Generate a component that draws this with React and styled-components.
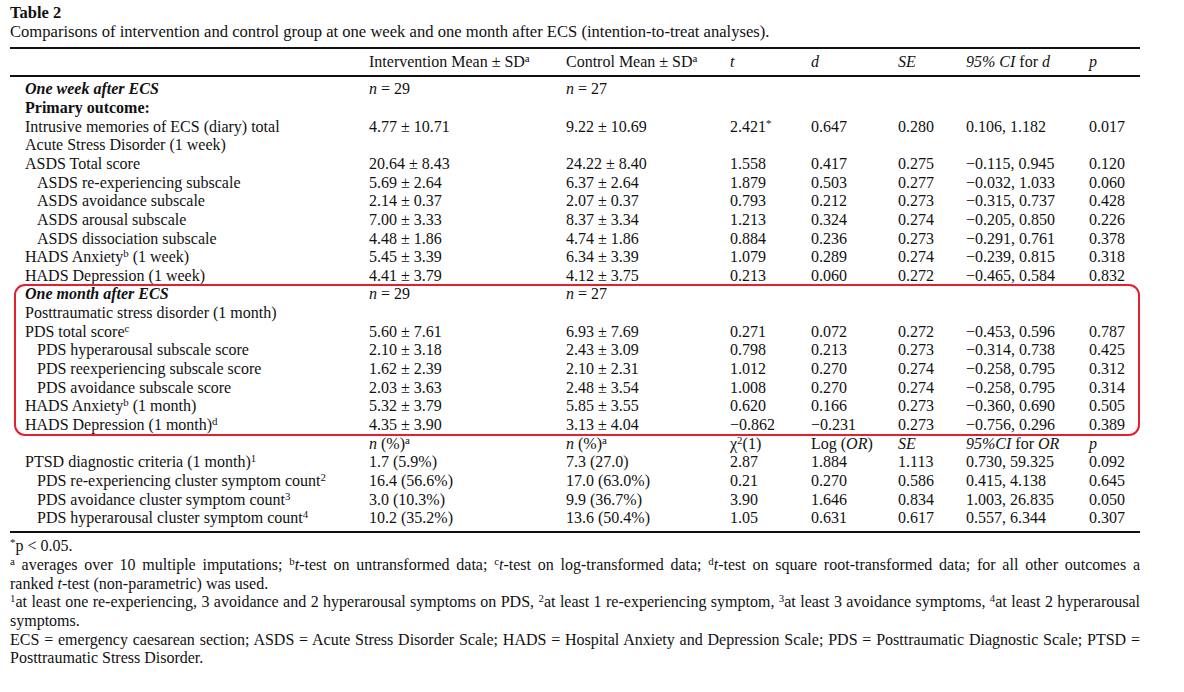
import React from "react";
import styled, { createGlobalStyle } from "styled-components";

const GlobalStyle = createGlobalStyle`
  body {
    margin: 0;
    background: #fff;
    color: #111;
    font-family: "Liberation Serif", "Times New Roman", serif;
    font-size: 16px;
  }
`;

const Page = styled.div`
  width: 1130px;
  padding: 3px 0 0 10px;
`;

const Title = styled.div`
  font-weight: bold;
  font-size: 16.5px;
  line-height: 19px;
`;

const Caption = styled.div`
  font-size: 16.6px;
  line-height: 19px;
`;

const Rule = styled.div`
  height: ${(p) => (p.$thin ? "1.5px" : "2px")};
  background: #111;
  margin-top: ${(p) => p.$top || 0}px;
`;

const Head = styled.div`
  padding: 3.5px 0 4px;
`;

const Body = styled.div`
  padding: 3.6px 0 3px;
`;

const Row = styled.div`
  display: grid;
  grid-template-columns: 359px 197px 164px 81px 87px 68px 123px 51px;
  line-height: 18.65px;
  white-space: nowrap;
`;

const Label = styled.div`
  padding-left: ${(p) => (p.$indent ? 27 : 15)}px;
  font-weight: ${(p) => (p.$bold ? "bold" : "normal")};
  font-style: ${(p) => (p.$italic ? "italic" : "normal")};
`;

const Cell = styled.div``;

const Highlight = styled.div`
  position: relative;

  &::before {
    content: "";
    position: absolute;
    left: 4px;
    right: 0;
    top: -1px;
    bottom: -1px;
    border: 2px solid #e5202c;
    border-radius: 11px;
    pointer-events: none;
  }
`;

const Sup = styled.sup`
  font-size: 0.68em;
  line-height: 0;
  vertical-align: 0.48em;
`;

const I = styled.i``;

const Notes = styled.div`
  margin-top: 4.4px;
  line-height: 18.65px;
`;

const Line = styled.div`
  white-space: nowrap;
  text-align: ${(p) => (p.$full ? "justify" : "left")};
  text-align-last: ${(p) => (p.$full ? "justify" : "left")};
`;

const N = ({ v }) => (
  <>
    <I>n</I> = {v}
  </>
);

const weekRows = [
  { label: "Intrusive memories of ECS (diary) total", v: ["4.77 ± 10.71", "9.22 ± 10.69", <>2.421<Sup>*</Sup></>, "0.647", "0.280", "0.106, 1.182", "0.017"] },
  { label: "Acute Stress Disorder (1 week)" },
  { label: "ASDS Total score", v: ["20.64 ± 8.43", "24.22 ± 8.40", "1.558", "0.417", "0.275", "−0.115, 0.945", "0.120"] },
  { label: "ASDS re-experiencing subscale", sub: true, v: ["5.69 ± 2.64", "6.37 ± 2.64", "1.879", "0.503", "0.277", "−0.032, 1.033", "0.060"] },
  { label: "ASDS avoidance subscale", sub: true, v: ["2.14 ± 0.37", "2.07 ± 0.37", "0.793", "0.212", "0.273", "−0.315, 0.737", "0.428"] },
  { label: "ASDS arousal subscale", sub: true, v: ["7.00 ± 3.33", "8.37 ± 3.34", "1.213", "0.324", "0.274", "−0.205, 0.850", "0.226"] },
  { label: "ASDS dissociation subscale", sub: true, v: ["4.48 ± 1.86", "4.74 ± 1.86", "0.884", "0.236", "0.273", "−0.291, 0.761", "0.378"] },
  { label: <>HADS Anxiety<Sup>b</Sup> (1 week)</>, v: ["5.45 ± 3.39", "6.34 ± 3.39", "1.079", "0.289", "0.274", "−0.239, 0.815", "0.318"] },
  { label: "HADS Depression (1 week)", v: ["4.41 ± 3.79", "4.12 ± 3.75", "0.213", "0.060", "0.272", "−0.465, 0.584", "0.832"] },
];

const monthRows = [
  { label: "Posttraumatic stress disorder (1 month)" },
  { label: <>PDS total score<Sup>c</Sup></>, v: ["5.60 ± 7.61", "6.93 ± 7.69", "0.271", "0.072", "0.272", "−0.453, 0.596", "0.787"] },
  { label: "PDS hyperarousal subscale score", sub: true, v: ["2.10 ± 3.18", "2.43 ± 3.09", "0.798", "0.213", "0.273", "−0.314, 0.738", "0.425"] },
  { label: "PDS reexperiencing subscale score", sub: true, v: ["1.62 ± 2.39", "2.10 ± 2.31", "1.012", "0.270", "0.274", "−0.258, 0.795", "0.312"] },
  { label: "PDS avoidance subscale score", sub: true, v: ["2.03 ± 3.63", "2.48 ± 3.54", "1.008", "0.270", "0.274", "−0.258, 0.795", "0.314"] },
  { label: <>HADS Anxiety<Sup>b</Sup> (1 month)</>, v: ["5.32 ± 3.79", "5.85 ± 3.55", "0.620", "0.166", "0.273", "−0.360, 0.690", "0.505"] },
  { label: <>HADS Depression (1 month)<Sup>d</Sup></>, v: ["4.35 ± 3.90", "3.13 ± 4.04", "−0.862", "−0.231", "0.273", "−0.756, 0.296", "0.389"] },
];

const countRows = [
  { label: <>PTSD diagnostic criteria (1 month)<Sup>1</Sup></>, v: ["1.7 (5.9%)", "7.3 (27.0)", "2.87", "1.884", "1.113", "0.730, 59.325", "0.092"] },
  { label: <>PDS re-experiencing cluster symptom count<Sup>2</Sup></>, sub: true, v: ["16.4 (56.6%)", "17.0 (63.0%)", "0.21", "0.270", "0.586", "0.415, 4.138", "0.645"] },
  { label: <>PDS avoidance cluster symptom count<Sup>3</Sup></>, sub: true, v: ["3.0 (10.3%)", "9.9 (36.7%)", "3.90", "1.646", "0.834", "1.003, 26.835", "0.050"] },
  { label: <>PDS hyperarousal cluster symptom count<Sup>4</Sup></>, sub: true, v: ["10.2 (35.2%)", "13.6 (50.4%)", "1.05", "0.631", "0.617", "0.557, 6.344", "0.307"] },
];

function DataRow({ row }) {
  const values = row.v || [];
  return (
    <Row>
      <Label $indent={row.sub}>{row.label}</Label>
      {Array.from({ length: 7 }).map((_, i) => (
        <Cell key={i}>{values[i]}</Cell>
      ))}
    </Row>
  );
}

function SectionRow({ title }) {
  return (
    <Row>
      <Label $bold $italic>{title}</Label>
      <Cell><N v={29} /></Cell>
      <Cell><N v={27} /></Cell>
    </Row>
  );
}

export default function App() {
  return (
    <Page>
      <GlobalStyle />
      <Title>Table 2</Title>
      <Caption>
        Comparisons of intervention and control group at one week and one month after ECS (intention-to-treat analyses).
      </Caption>
      <Rule $top={6} />
      <Head>
        <Row>
          <Label />
          <Cell>Intervention Mean ± SD<Sup>a</Sup></Cell>
          <Cell>Control Mean ± SD<Sup>a</Sup></Cell>
          <Cell><I>t</I></Cell>
          <Cell><I>d</I></Cell>
          <Cell><I>SE</I></Cell>
          <Cell><I>95% CI</I> for <I>d</I></Cell>
          <Cell><I>p</I></Cell>
        </Row>
      </Head>
      <Rule $thin />
      <Body>
        <SectionRow title="One week after ECS" />
        <Row>
          <Label $bold>Primary outcome:</Label>
        </Row>
        {weekRows.map((r, i) => (
          <DataRow key={i} row={r} />
        ))}
        <Highlight>
          <SectionRow title="One month after ECS" />
          {monthRows.map((r, i) => (
            <DataRow key={i} row={r} />
          ))}
        </Highlight>
        <Row>
          <Label />
          <Cell><I>n</I> (%)<Sup>a</Sup></Cell>
          <Cell><I>n</I> (%)<Sup>a</Sup></Cell>
          <Cell>χ<Sup>2</Sup>(1)</Cell>
          <Cell>Log (<I>OR</I>)</Cell>
          <Cell><I>SE</I></Cell>
          <Cell><I>95%CI</I> for <I>OR</I></Cell>
          <Cell><I>p</I></Cell>
        </Row>
        {countRows.map((r, i) => (
          <DataRow key={i} row={r} />
        ))}
      </Body>
      <Rule />
      <Notes>
        <Line><Sup>*</Sup>p &lt; 0.05.</Line>
        <Line $full>
          <Sup>a</Sup> averages over 10 multiple imputations; <Sup>b</Sup><I>t</I>-test on untransformed data; <Sup>c</Sup><I>t</I>-test on log-transformed data; <Sup>d</Sup><I>t</I>-test on square root-transformed data; for all other outcomes a
        </Line>
        <Line>ranked <I>t</I>-test (non-parametric) was used.</Line>
        <Line $full>
          <Sup>1</Sup>at least one re-experiencing, 3 avoidance and 2 hyperarousal symptoms on PDS, <Sup>2</Sup>at least 1 re-experiencing symptom, <Sup>3</Sup>at least 3 avoidance symptoms, <Sup>4</Sup>at least 2 hyperarousal
        </Line>
        <Line>symptoms.</Line>
        <Line $full>
          ECS = emergency caesarean section; ASDS = Acute Stress Disorder Scale; HADS = Hospital Anxiety and Depression Scale; PDS = Posttraumatic Diagnostic Scale; PTSD =
        </Line>
        <Line>Posttraumatic Stress Disorder.</Line>
      </Notes>
    </Page>
  );
}
